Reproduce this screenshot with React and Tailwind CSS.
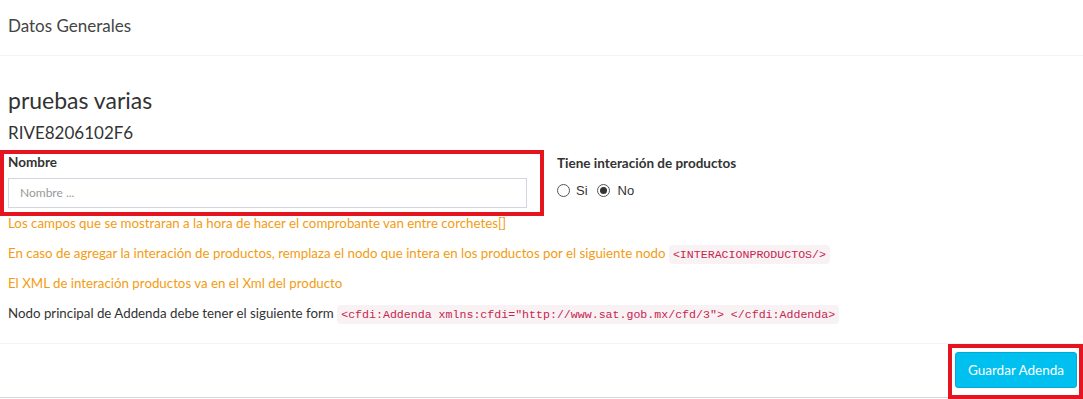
export default function App() {
  const code = "font-['Liberation_Mono',monospace] text-[11.6px] leading-none align-baseline text-[#c7254e] bg-[#f9f2f4] rounded px-[4px] py-[3px]";
  return (
    <div className="w-[1083px] h-[399px] bg-white text-[#333] font-['Lato',sans-serif] overflow-hidden">
      <div className="h-[398px] flex flex-col border-b border-[#d2d6de]">
        <div className="h-[56px] flex items-center px-[8px] border-b border-[#f4f4f4]">
          <h3 className="text-[17px] text-[#444] leading-none -mt-[5px]">Datos Generales</h3>
        </div>
        <div className="px-[8px] pt-[32px] flex-1">
          <div className="text-[23px] leading-[26px] -mt-[1px]">pruebas varias</div>
          <div className="text-[17px] leading-[20px] mt-[10px]">RIVE8206102F6</div>
          <div className="flex mt-[11px] -ml-[4px]">
            <div className="w-[536px] pl-[4px] pr-[13px] pb-[4px] outline-4 outline-[#e4151f]">
              <div className="text-[13.5px] font-bold leading-[16px]">Nombre</div>
              <div className="mt-[8px] h-[30px] border border-[#d2d6de] flex items-center px-[11px] text-[12px] text-[#999]">Nombre ...</div>
            </div>
            <div className="ml-[17px] pt-[1px]">
              <div className="text-[13.5px] font-bold leading-[16px]">Tiene interación de productos</div>
              <div className="flex items-center mt-[10px] text-[13px] font-['Liberation_Sans',sans-serif]">
                <span className="w-[13px] h-[13px] rounded-full border border-[#555] bg-white"></span>
                <span className="ml-[6px]">Si</span>
                <span className="ml-[9px] w-[13px] h-[13px] rounded-full border border-[#555] bg-white flex items-center justify-center">
                  <span className="w-[7px] h-[7px] rounded-full bg-[#333]"></span>
                </span>
                <span className="ml-[8px]">No</span>
              </div>
            </div>
          </div>
          <div className="mt-[1px] text-[13.3px] leading-[20px] text-[#f39c12]">
            <p>Los campos que se mostraran a la hora de hacer el comprobante van entre corchetes[]</p>
            <p className="mt-[10px]">En caso de agregar la interación de productos, remplaza el nodo que intera en los productos por el siguiente nodo <code className={code}>&lt;INTERACIONPRODUCTOS/&gt;</code></p>
            <p className="mt-[10px]">El XML de interación productos va en el Xml del producto</p>
            <p className="mt-[10px] text-[#333]">Nodo principal de Addenda debe tener el siguiente form <code className={code}>&lt;cfdi:Addenda xmlns:cfdi="http://www.sat.gob.mx/cfd/3"&gt; &lt;/cfdi:Addenda&gt;</code></p>
          </div>
        </div>
        <div className="h-[54px] border-t border-[#f4f4f4] flex items-start justify-end relative z-10">
          <div className="border-4 border-[#e4151f] pt-[4px] pl-[3px] pr-[2px] pb-[7px] mb-[-3px]">
            <button className="h-[36px] w-[122px] bg-[#00c0ef] border border-[#00acd6] rounded-[3px] text-white text-[13.5px]">Guardar Adenda</button>
          </div>
        </div>
      </div>
    </div>
  );
}
